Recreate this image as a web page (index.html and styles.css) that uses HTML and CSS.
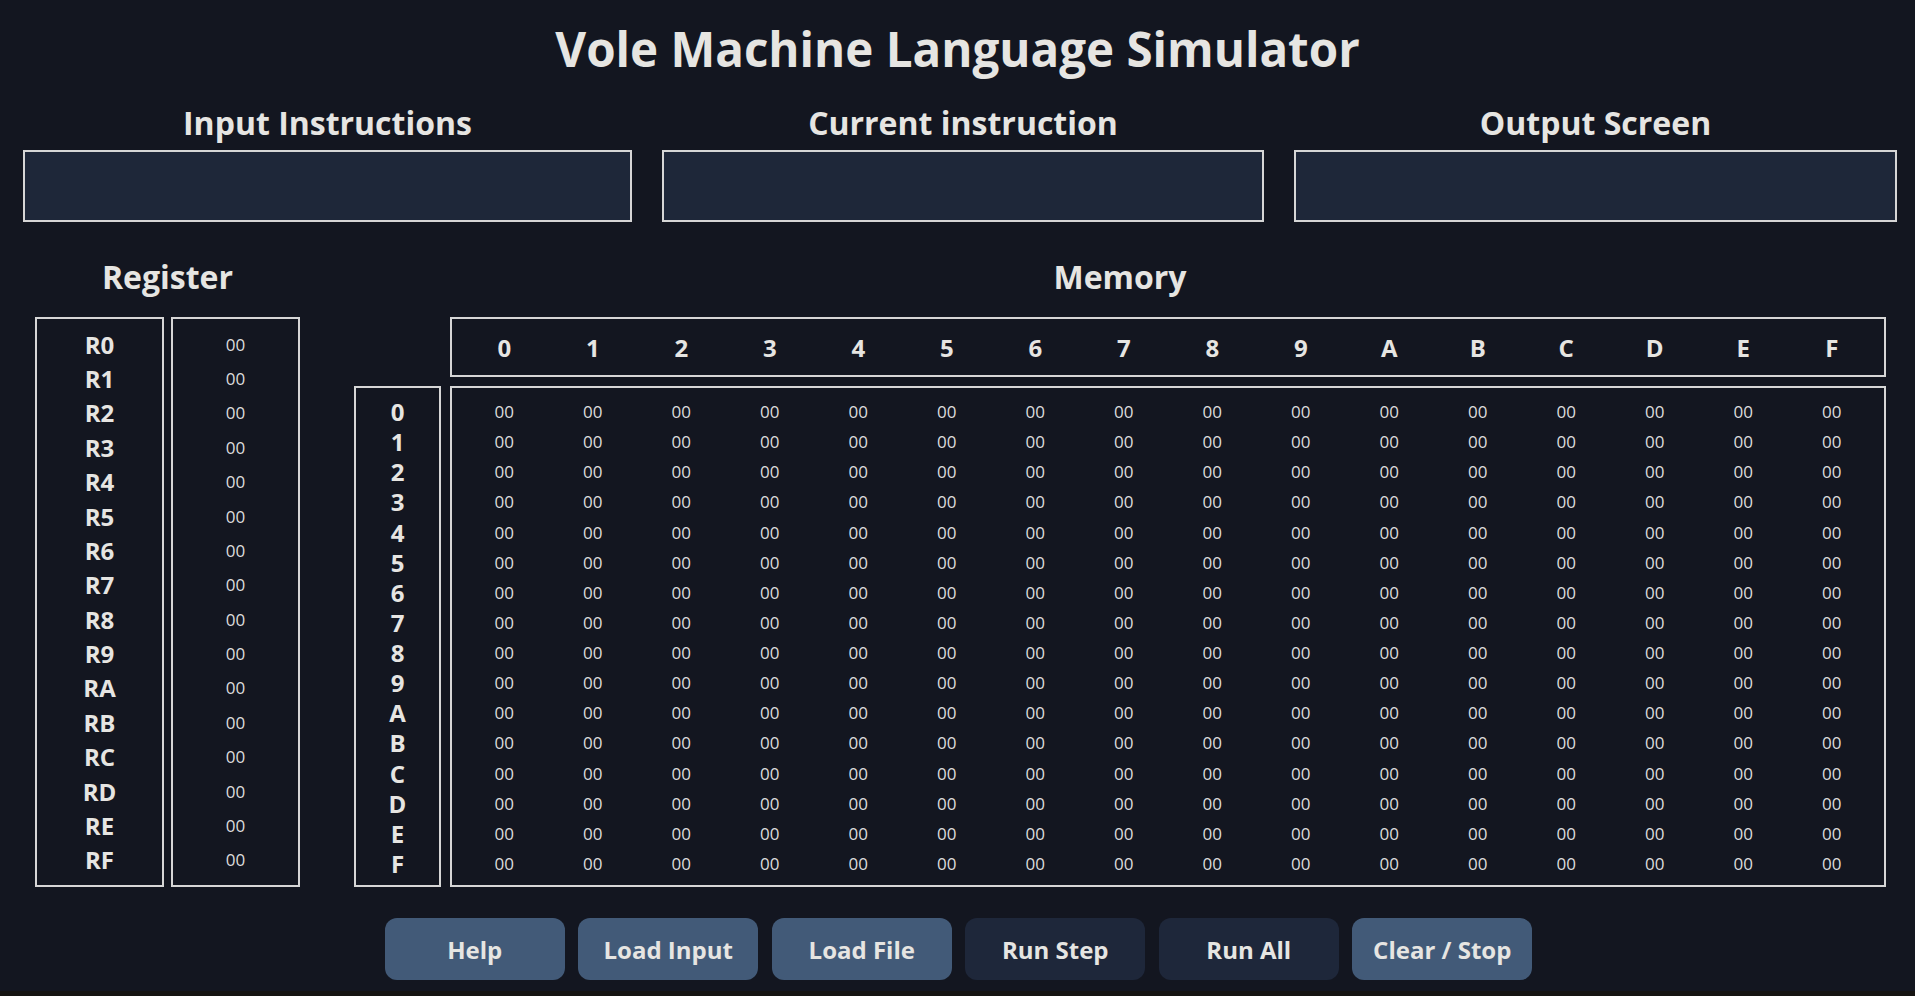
FILE: index.html
```html
<!DOCTYPE html>
<html lang="en">
<head>
<meta charset="utf-8">
<title>Vole Machine Language Simulator</title>
<link rel="stylesheet" href="styles.css">
</head>
<body>
<main class="app">
  <h1 class="title">Vole Machine Language Simulator</h1>

  <section class="io-row">
    <div class="panel">
      <h2 class="section-title">Input Instructions</h2>
      <div class="screen"></div>
    </div>
    <div class="panel">
      <h2 class="section-title">Current instruction</h2>
      <div class="screen"></div>
    </div>
    <div class="panel">
      <h2 class="section-title">Output Screen</h2>
      <div class="screen"></div>
    </div>
  </section>

  <section class="machine">
    <div class="registers">
      <h2 class="section-title">Register</h2>
      <div class="reg-tables">
        <div class="reg-box reg-names">
          <span>R0</span><span>R1</span><span>R2</span><span>R3</span><span>R4</span><span>R5</span><span>R6</span><span>R7</span><span>R8</span><span>R9</span><span>RA</span><span>RB</span><span>RC</span><span>RD</span><span>RE</span><span>RF</span>
        </div>
        <div class="reg-box reg-values">
          <span>00</span><span>00</span><span>00</span><span>00</span><span>00</span><span>00</span><span>00</span><span>00</span><span>00</span><span>00</span><span>00</span><span>00</span><span>00</span><span>00</span><span>00</span><span>00</span>
        </div>
      </div>
    </div>

    <div class="memory">
      <h2 class="section-title">Memory</h2>
      <div class="mem-head-row">
        <div class="mem-spacer"></div>
        <div class="col-head">
          <span>0</span><span>1</span><span>2</span><span>3</span><span>4</span><span>5</span><span>6</span><span>7</span><span>8</span><span>9</span><span>A</span><span>B</span><span>C</span><span>D</span><span>E</span><span>F</span>
        </div>
      </div>
      <div class="mem-body">
        <div class="row-labels">
          <span>0</span><span>1</span><span>2</span><span>3</span><span>4</span><span>5</span><span>6</span><span>7</span><span>8</span><span>9</span><span>A</span><span>B</span><span>C</span><span>D</span><span>E</span><span>F</span>
        </div>
        <div class="cells">
          <span>00</span><span>00</span><span>00</span><span>00</span><span>00</span><span>00</span><span>00</span><span>00</span><span>00</span><span>00</span><span>00</span><span>00</span><span>00</span><span>00</span><span>00</span><span>00</span>
          <span>00</span><span>00</span><span>00</span><span>00</span><span>00</span><span>00</span><span>00</span><span>00</span><span>00</span><span>00</span><span>00</span><span>00</span><span>00</span><span>00</span><span>00</span><span>00</span>
          <span>00</span><span>00</span><span>00</span><span>00</span><span>00</span><span>00</span><span>00</span><span>00</span><span>00</span><span>00</span><span>00</span><span>00</span><span>00</span><span>00</span><span>00</span><span>00</span>
          <span>00</span><span>00</span><span>00</span><span>00</span><span>00</span><span>00</span><span>00</span><span>00</span><span>00</span><span>00</span><span>00</span><span>00</span><span>00</span><span>00</span><span>00</span><span>00</span>
          <span>00</span><span>00</span><span>00</span><span>00</span><span>00</span><span>00</span><span>00</span><span>00</span><span>00</span><span>00</span><span>00</span><span>00</span><span>00</span><span>00</span><span>00</span><span>00</span>
          <span>00</span><span>00</span><span>00</span><span>00</span><span>00</span><span>00</span><span>00</span><span>00</span><span>00</span><span>00</span><span>00</span><span>00</span><span>00</span><span>00</span><span>00</span><span>00</span>
          <span>00</span><span>00</span><span>00</span><span>00</span><span>00</span><span>00</span><span>00</span><span>00</span><span>00</span><span>00</span><span>00</span><span>00</span><span>00</span><span>00</span><span>00</span><span>00</span>
          <span>00</span><span>00</span><span>00</span><span>00</span><span>00</span><span>00</span><span>00</span><span>00</span><span>00</span><span>00</span><span>00</span><span>00</span><span>00</span><span>00</span><span>00</span><span>00</span>
          <span>00</span><span>00</span><span>00</span><span>00</span><span>00</span><span>00</span><span>00</span><span>00</span><span>00</span><span>00</span><span>00</span><span>00</span><span>00</span><span>00</span><span>00</span><span>00</span>
          <span>00</span><span>00</span><span>00</span><span>00</span><span>00</span><span>00</span><span>00</span><span>00</span><span>00</span><span>00</span><span>00</span><span>00</span><span>00</span><span>00</span><span>00</span><span>00</span>
          <span>00</span><span>00</span><span>00</span><span>00</span><span>00</span><span>00</span><span>00</span><span>00</span><span>00</span><span>00</span><span>00</span><span>00</span><span>00</span><span>00</span><span>00</span><span>00</span>
          <span>00</span><span>00</span><span>00</span><span>00</span><span>00</span><span>00</span><span>00</span><span>00</span><span>00</span><span>00</span><span>00</span><span>00</span><span>00</span><span>00</span><span>00</span><span>00</span>
          <span>00</span><span>00</span><span>00</span><span>00</span><span>00</span><span>00</span><span>00</span><span>00</span><span>00</span><span>00</span><span>00</span><span>00</span><span>00</span><span>00</span><span>00</span><span>00</span>
          <span>00</span><span>00</span><span>00</span><span>00</span><span>00</span><span>00</span><span>00</span><span>00</span><span>00</span><span>00</span><span>00</span><span>00</span><span>00</span><span>00</span><span>00</span><span>00</span>
          <span>00</span><span>00</span><span>00</span><span>00</span><span>00</span><span>00</span><span>00</span><span>00</span><span>00</span><span>00</span><span>00</span><span>00</span><span>00</span><span>00</span><span>00</span><span>00</span>
          <span>00</span><span>00</span><span>00</span><span>00</span><span>00</span><span>00</span><span>00</span><span>00</span><span>00</span><span>00</span><span>00</span><span>00</span><span>00</span><span>00</span><span>00</span><span>00</span>
        </div>
      </div>
    </div>
  </section>

  <div class="controls">
    <button class="btn btn-light">Help</button>
    <button class="btn btn-light">Load Input</button>
    <button class="btn btn-light">Load File</button>
    <button class="btn btn-dark">Run Step</button>
    <button class="btn btn-dark">Run All</button>
    <button class="btn btn-light">Clear / Stop</button>
  </div>
</main>
</body>
</html>
```

FILE: styles.css
```css
html {
  background: #151412;
}

body {
  margin: 0;
  background: #131620;
  color: #e6e5e2;
  font-family: "Open Sans", "Noto Sans", sans-serif;
}

.app {
  height: 991px;
  box-sizing: border-box;
  padding-top: 18px;
}

.title {
  margin: 0;
  text-align: center;
  font-size: 47.5px;
  line-height: 62px;
  font-weight: 700;
}

.section-title {
  margin: 0;
  text-align: center;
  font-size: 32px;
  line-height: 40px;
  font-weight: 700;
}

.io-row {
  display: grid;
  grid-template-columns: 609px 602px 603px;
  column-gap: 30px;
  padding-left: 23px;
  margin-top: 23px;
}

.screen {
  margin-top: 7px;
  height: 68px;
  border: 2px solid #d6d6d6;
  background: #1e2739;
}

.machine {
  display: flex;
  gap: 54px;
  padding-left: 35px;
  margin-top: 35px;
}

.registers {
  width: 265px;
}

.reg-tables {
  display: flex;
  gap: 7px;
  margin-top: 20px;
}

.reg-box {
  width: 125px;
  height: 550px;
  padding: 8px 0;
  border: 2px solid #d6d6d6;
  display: flex;
  flex-direction: column;
}

.reg-box span {
  height: 34.375px;
  display: flex;
  align-items: center;
  justify-content: center;
}

.reg-names {
  font-size: 24px;
  font-weight: 700;
}

.reg-values {
  font-size: 17px;
  color: #dcdcdc;
}

.memory {
  width: 1532px;
}

.mem-head-row {
  display: flex;
  gap: 9px;
  margin-top: 20px;
}

.mem-spacer {
  width: 87px;
}

.col-head {
  flex: 1;
  height: 56px;
  padding: 0 8px;
  border: 2px solid #d6d6d6;
  display: grid;
  grid-template-columns: repeat(16, 1fr);
  align-items: center;
  text-align: center;
  font-size: 24px;
  font-weight: 700;
}

.mem-body {
  display: flex;
  gap: 9px;
  margin-top: 9px;
}

.row-labels {
  width: 83px;
  padding: 8.5px 0 6.5px;
  border: 2px solid #d6d6d6;
  display: grid;
  grid-auto-rows: 30.125px;
  align-items: center;
  text-align: center;
  font-size: 24px;
  font-weight: 700;
}

.cells {
  flex: 1;
  padding: 8.5px 8px 6.5px;
  border: 2px solid #d6d6d6;
  display: grid;
  grid-template-columns: repeat(16, 1fr);
  grid-auto-rows: 30.125px;
  align-items: center;
  text-align: center;
  font-size: 17px;
  color: #dcdcdc;
}

.controls {
  display: flex;
  justify-content: center;
  gap: 13.5px;
  margin-top: 31px;
  padding-left: 2px;
}

.btn {
  width: 180px;
  height: 62px;
  border: none;
  border-radius: 12px;
  font-family: inherit;
  font-size: 24px;
  font-weight: 700;
  color: #e6e5e2;
  cursor: pointer;
}

.btn-light {
  background: #425a78;
}

.btn-dark {
  background: #1e273a;
}
```
